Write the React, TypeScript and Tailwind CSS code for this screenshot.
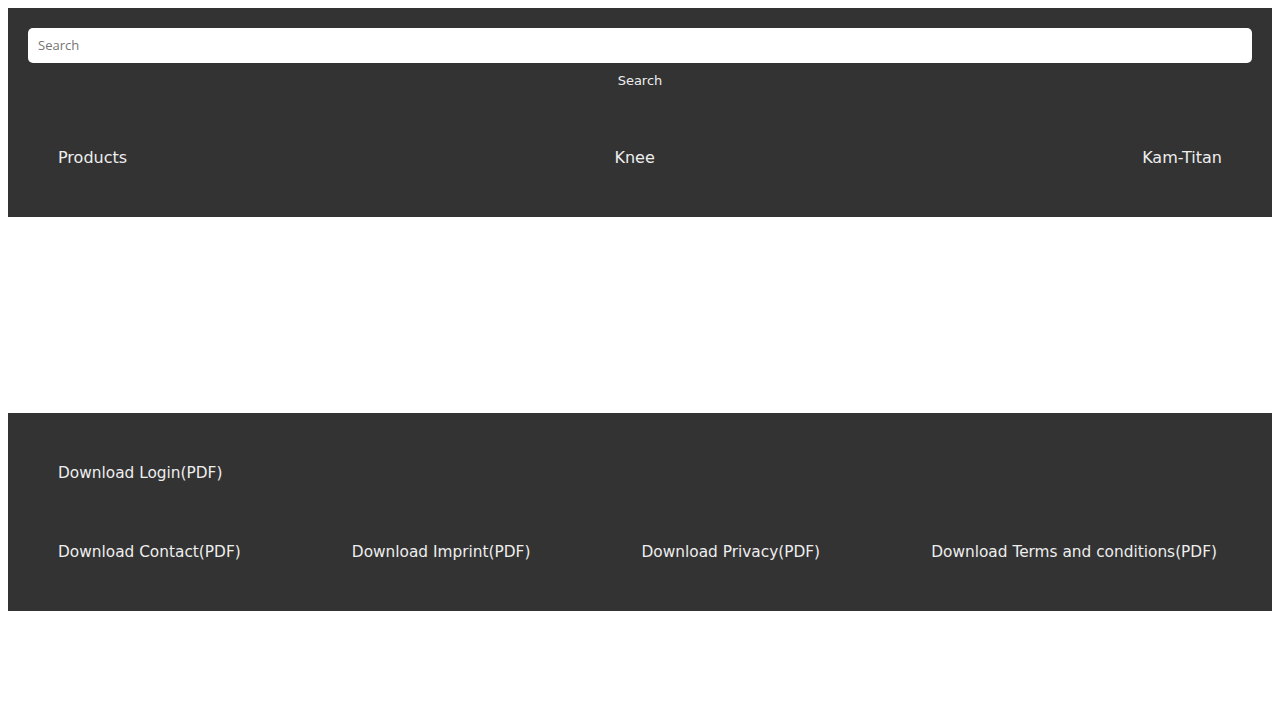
const navLinks = ["Products", "Knee", "Kam-Titan"];
const downloads = ["Contact", "Imprint", "Privacy", "Terms and conditions"];

export default function App() {
  return (
    <div className="min-h-[720px] bg-white p-2 font-['DejaVu_Sans',sans-serif] text-[#eeeeee]">
      {/* --- Header --- */}
      <header className="bg-[#333333] px-5 pt-5 pb-[47px]">
        <input
          type="text"
          placeholder="Search"
          className="block h-[35px] w-full rounded-[5px] bg-white px-[10px] pb-[1px] font-['Open_Sans',sans-serif] text-[13px] text-[#333] outline-none placeholder:text-[#757575]"
        />
        <div className="flex justify-center pt-[10px]">
          <button
            type="button"
            className="text-[13px] leading-[16px] text-[#eeeeee]"
          >
            Search
          </button>
        </div>
        <nav className="mt-[57px] flex justify-between px-[30px]">
          {navLinks.map((link) => (
            <a key={link} className="text-base leading-6">
              {link}
            </a>
          ))}
        </nav>
      </header>

      <div className="h-[196px]" />

      {/* --- Footer --- */}
      <footer className="bg-[#333333] pt-[48px] pb-[47px] pl-[50px] pr-[55px]">
        <a className="block text-[15.35px] leading-6">Download Login(PDF)</a>
        <div className="mt-[55px] flex justify-between">
          {downloads.map((item) => (
            <a key={item} className="text-[15.35px] leading-6">
              Download {item}(PDF)
            </a>
          ))}
        </div>
      </footer>
    </div>
  );
}
